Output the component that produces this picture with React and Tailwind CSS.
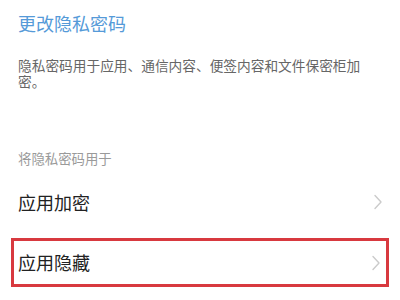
function Chevron() {
  return (
    <svg width="10" height="16" viewBox="0 0 10 16" fill="none">
      <path d="M2 1.5 L8 8 L2 14.5" stroke="#cbcbcb" strokeWidth="1.4" strokeLinecap="round" strokeLinejoin="round" />
    </svg>
  );
}

export default function App() {
  return (
    <div className="w-[400px] h-[300px] bg-white overflow-hidden font-['Noto_Sans_CJK_SC',sans-serif]">
      <div className="px-[18px] pt-[11px] text-[18px] leading-[24px] text-[#559ad8]">
        更改隐私密码
      </div>

      <p className="mt-[21.5px] pl-[18px] pr-[30px] text-[13.7px] leading-[16px] text-[#666666]">
        隐私密码用于应用、通信内容、便签内容和文件保密柜加密。
      </p>

      <div className="mt-[61.5px] px-[18px] text-[13.4px] leading-[16px] text-[#9a9a9a]">
        将隐私密码用于
      </div>

      <div className="mt-[11.5px] h-[49px] pl-[18px] pr-[17px] flex items-center justify-between">
        <span className="text-[18px] text-[#222222]">应用加密</span>
        <Chevron />
      </div>

      <div className="mt-[11.5px] mx-[11px] h-[49px] border-[3px] border-[#d8393f] pl-[4px] pr-[5px] flex items-center justify-between">
        <span className="text-[18px] text-[#222222]">应用隐藏</span>
        <Chevron />
      </div>
    </div>
  );
}
